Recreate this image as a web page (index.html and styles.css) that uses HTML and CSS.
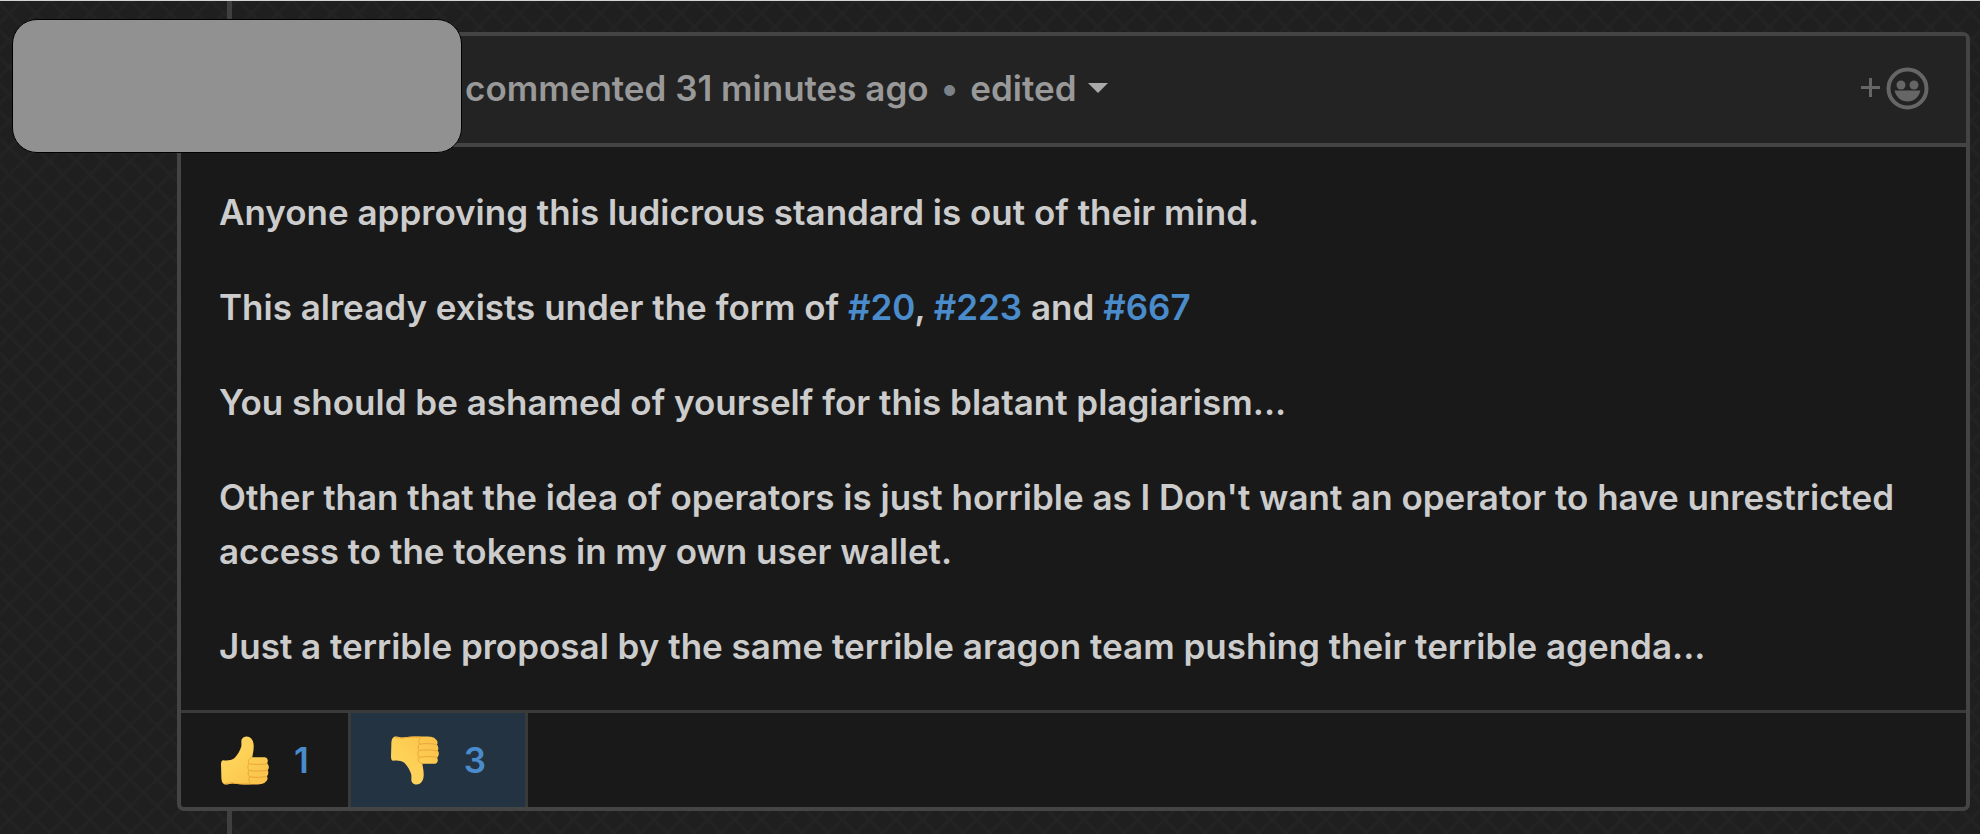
FILE: index.html
```
<!DOCTYPE html>
<html lang="en">
<head>
  <meta charset="utf-8">
  <meta name="viewport" content="width=device-width, initial-scale=1">
  <title>Comment</title>
  <link rel="stylesheet" href="styles.css">
</head>
<body>
  <svg class="defs" aria-hidden="true">
    <defs>
      <linearGradient id="skin" x1="0" y1="0" x2="1" y2="1">
        <stop offset="0" stop-color="#ffd968"/>
        <stop offset="0.5" stop-color="#fdcf54"/>
        <stop offset="1" stop-color="#f9bf48"/>
      </linearGradient>
      <symbol id="thumb" viewBox="60 44 150 152">
        <path fill="url(#skin)" d="M70 119 C82 121 94 119 103 113 C113 103 121 89 124 77 C125 69 123 62 125 57 C129 47 141 46 149 50 C158 55 162 67 161 80 C161 91 158 101 157 110 L193 110 C201 110 205 117 203 124 C201 129 201 129 204 132 C208 138 207 145 203 149 C206 153 206 162 201 167 C204 172 203 180 197 184 C190 192 178 192 164 192 L132 192 C115 192 106 189 98 189 C90 189 84 193 76 192 C66 190 64 180 64 168 L63 132 C63 124 65 119 70 119 Z"/>
        <g fill="none" stroke="#eba63a" stroke-width="3" stroke-linecap="round">
          <path d="M149 130 C165 133 186 132 201 130"/>
          <path d="M148 150 C165 153 186 152 202 149"/>
          <path d="M150 169 C165 172 184 171 199 168"/>
          <path d="M155 111 C145 115 142 124 148 130 C142 136 142 145 148 150 C143 156 143 164 149 169 C145 175 146 182 151 187"/>
        </g>
        <path fill="none" stroke="#f0ac38" stroke-width="3" stroke-linecap="round" d="M76 190 C86 189 90 186 99 187 C112 190 130 191 150 190"/>
      </symbol>
    </defs>
  </svg>

  <main class="timeline">
    <div class="redaction" aria-hidden="true"></div>
    <article class="comment">
      <header class="comment-header">
        <p class="meta">
          <span>commented 31 minutes ago</span>
          <span class="dot">•</span>
          <button class="edited" type="button">edited<span class="caret"></span></button>
        </p>
        <button class="add-reaction" type="button" aria-label="Add your reaction">
          <svg width="70" height="46" viewBox="0 0 70 46" aria-hidden="true">
            <path d="M1 22.500H20M10.500 13V32" stroke="#666" stroke-width="3" fill="none"/>
            <circle cx="47.500" cy="23.500" r="19" stroke="#666" stroke-width="4" fill="none"/>
            <circle cx="41" cy="20" r="4.500" fill="#666"/>
            <circle cx="54" cy="20" r="4.500" fill="#666"/>
            <path d="M34.500 25.500H60.500C59 32 54 36.500 47.500 36.500S36 32 34.500 25.500Z" fill="#666"/>
          </svg>
        </button>
      </header>
      <div class="comment-body">
        <p>Anyone approving this ludicrous standard is out of their mind.</p>
        <p>This already exists under the form of <a href="#20">#20</a>, <a href="#223">#223</a> and <a href="#667">#667</a></p>
        <p>You should be ashamed of yourself for this blatant plagiarism...</p>
        <p>Other than that the idea of operators is just horrible as I Don't want an operator to have unrestricted access to the tokens in my own user wallet.</p>
        <p>Just a terrible proposal by the same terrible aragon team pushing their terrible agenda...</p>
      </div>
      <footer class="reactions">
        <button class="reaction" type="button" aria-label="Thumbs up, 1">
          <svg class="emoji" aria-hidden="true"><use href="#thumb"/></svg>
          <span>1</span>
        </button>
        <button class="reaction selected" type="button" aria-pressed="true" aria-label="Thumbs down, 3">
          <svg class="emoji down" aria-hidden="true"><use href="#thumb"/></svg>
          <span>3</span>
        </button>
      </footer>
    </article>
  </main>
</body>
</html>
```
FILE: styles.css
```
* {
  box-sizing: border-box;
}

body {
  margin: 0;
  min-height: 100vh;
  border-top: 1px solid #d0d4d3;
  display: flex;
  background-color: #1f1f1f;
  background-image:
    repeating-linear-gradient(45deg, transparent 0 14px, #242424 17px, transparent 19px),
    repeating-linear-gradient(-45deg, transparent 0 14px, #242424 17px, transparent 19px);
  color: #ccc;
  font-family: Inter, "Liberation Sans", sans-serif;
  font-size: 35px;
  font-weight: 600;
  line-height: 54px;
}

button {
  border: 0;
  padding: 0;
  background: none;
  color: inherit;
  font: inherit;
  cursor: pointer;
}

a {
  color: #4a8ccb;
  text-decoration: none;
}

p {
  margin: 0;
}

.defs {
  position: absolute;
  width: 0;
  height: 0;
}

.timeline {
  position: relative;
  flex: 1;
  padding: 31px 10px 22px 177px;
}

.timeline::before {
  content: "";
  position: absolute;
  top: 0;
  bottom: 0;
  left: 227px;
  width: 5px;
  background: #3f3f3f;
}

/* Cover hiding the avatar and the author's name */
.redaction {
  position: absolute;
  z-index: 1;
  top: 18px;
  left: 12px;
  width: 450px;
  height: 134px;
  border: 1px solid #000;
  border-radius: 25px;
  background: #919191;
}

.comment {
  position: relative;
  border: 4px solid #444;
  border-radius: 7px;
  background: #191919;
}

.comment-header {
  display: flex;
  align-items: center;
  justify-content: space-between;
  padding: 25px 36px 28px 284px;
  border-bottom: 4px solid #444;
  border-radius: 3px 3px 0 0;
  background: #232323;
  color: #999;
}

.meta {
  display: flex;
  gap: 12px;
}

.dot {
  color: #7b828a;
}

.edited {
  display: flex;
  align-items: center;
  gap: 11px;
}

.caret {
  border: 10px solid transparent;
  border-top-color: #aaa;
  border-bottom: 0;
}

.add-reaction {
  display: flex;
}

.comment-body {
  display: grid;
  gap: 41px;
  padding: 38px 38px 37px;
}

.reactions {
  display: flex;
  border-top: 3px solid #3a3a3a;
}

.reaction {
  display: flex;
  align-items: center;
  gap: 24px;
  padding: 20px 39px;
  border-right: 3px solid #3a3a3a;
  color: #4a8ccb;
}

.reaction.selected {
  background: #243342;
}

.emoji {
  width: 50px;
  height: 51px;
}

.emoji.down {
  transform: scaleY(-1);
}
```
